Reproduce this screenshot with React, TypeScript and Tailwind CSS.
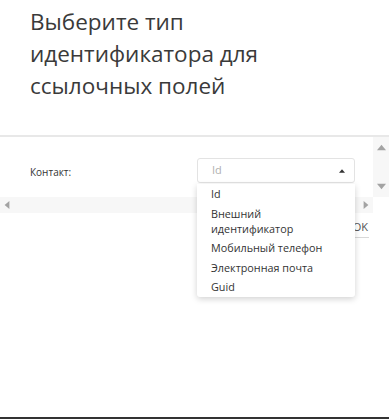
import React from 'react'

const options = [
  'Id',
  'Внешний идентификатор',
  'Мобильный телефон',
  'Электронная почта',
  'Guid',
]

function Tri({ dir, className }: { dir: 'up' | 'down' | 'left' | 'right'; className?: string }) {
  const pts = {
    up: '0,8 5,2 10,8',
    down: '0,2 5,8 10,2',
    left: '8,0 2,5 8,10',
    right: '2,0 8,5 2,10',
  }[dir]
  return (
    <svg viewBox="0 0 10 10" className={className}>
      <polygon points={pts} fill="currentColor" />
    </svg>
  )
}

export default function App() {
  return (
    <div className="relative w-[389px] h-[419px] bg-white overflow-hidden font-['Open_Sans',sans-serif] text-[#333]">
      {/* Header */}
      <h1 className="pl-[30px] pt-[6px] text-[22.5px] leading-[32px] text-[#3a3a3a] font-normal">
        Выберите тип
        <br />
        идентификатора для
        <br />
        ссылочных полей
      </h1>

      {/* Scrollable settings area */}
      <div className="mt-[33px] border-t-2 border-[#e8e8e8]">
        <div className="flex h-[60px]">
          <div className="flex-1 flex items-start">
            <span className="pl-[30px] pt-[28px] w-[197px] text-[10px] leading-[14px] text-[#333]">Контакт:</span>
            <div className="mt-[21px] w-[158px] h-[25px] border border-[#e3e3e3] rounded-[3px] flex items-center pl-[14px] pr-[9px]">
              <span className="flex-1 text-[11px] text-[#b0b0b0]">Id</span>
              <Tri dir="up" className="w-[6px] h-[6px] text-[#333]" />
            </div>
          </div>
          <div className="w-[16px] bg-[#f7f7f7] flex flex-col items-center justify-between py-[6px] text-[#a3a3a3]">
            <Tri dir="up" className="w-[9px] h-[9px]" />
            <Tri dir="down" className="w-[9px] h-[9px]" />
          </div>
        </div>
        <div className="flex h-[16px] w-[373px] bg-[#f7f7f7] items-center justify-between px-[3px] text-[#a3a3a3]">
          <Tri dir="left" className="w-[8px] h-[10px]" />
          <Tri dir="right" className="w-[8px] h-[10px]" />
        </div>
      </div>

      {/* OK button partly under the list */}
      <div className="flex justify-end pr-[20px] pt-[6px]">
        <span className="text-[11px] leading-[16px] text-[#555] pb-[2px] border-b border-[#d8d8d8] px-[1px]">OK</span>
      </div>

      {/* Open dropdown list */}
      <ul className="absolute left-[197px] top-[184px] w-[158px] bg-white rounded-b-[3px] shadow-[0_2px_6px_rgba(0,0,0,0.18)]">
        {options.map((o) => (
          <li key={o} className="px-[14px] py-[2.25px] pr-[20px] text-[10.8px] leading-[15px] text-[#333]">
            {o}
          </li>
        ))}
      </ul>

      {/* Bottom edge */}
      <div className="absolute left-0 right-0 bottom-0 h-[2px] bg-[#333]" />
    </div>
  )
}
